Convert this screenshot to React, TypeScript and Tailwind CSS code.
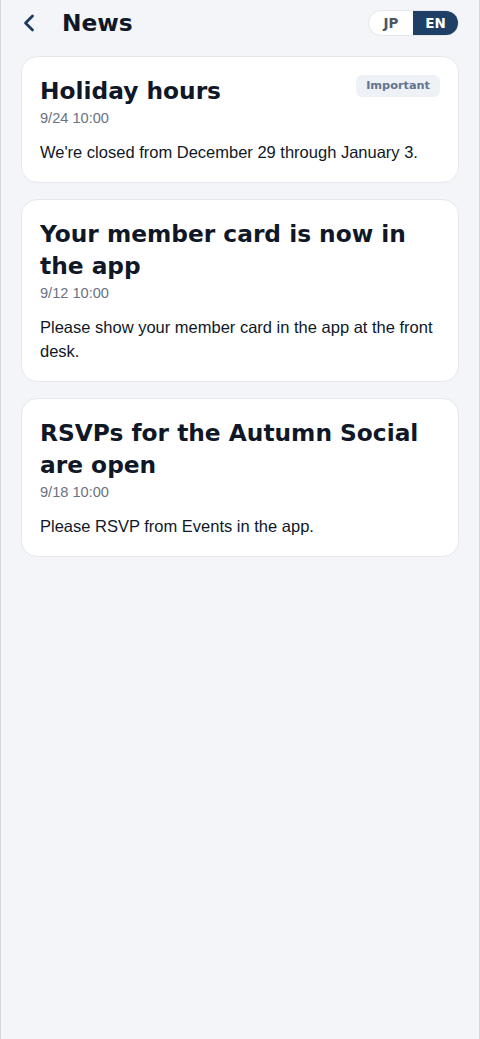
import { ChevronLeft } from "lucide-react";

type NewsItem = {
  title: string;
  date: string;
  body: string;
  important?: boolean;
};

const news: NewsItem[] = [
  {
    title: "Holiday hours",
    date: "9/24 10:00",
    body: "We're closed from December 29 through January 3.",
    important: true,
  },
  {
    title: "Your member card is now in the app",
    date: "9/12 10:00",
    body: "Please show your member card in the app at the front desk.",
  },
  {
    title: "RSVPs for the Autumn Social are open",
    date: "9/18 10:00",
    body: "Please RSVP from Events in the app.",
  },
];

function NewsCard({ item }: { item: NewsItem }) {
  return (
    <div className="rounded-2xl border border-gray-200 bg-white p-[18px]">
      <div className="flex items-start justify-between gap-3">
        <h2 className="font-['DejaVu_Sans',sans-serif] text-[23.3px] font-bold leading-8 text-gray-900">
          {item.title}
        </h2>
        {item.important && (
          <span className="shrink-0 rounded-md bg-[#eef1f5] px-2.5 py-[3px] font-['DejaVu_Sans',sans-serif] text-[11.3px] font-bold leading-4 text-slate-500">
            Important
          </span>
        )}
      </div>
      <div className="mt-[1px] text-[14.6px] leading-5 text-gray-500">
        {item.date}
      </div>
      <p className="mt-3 text-[16.5px] leading-6 text-gray-900">
        {item.body}
      </p>
    </div>
  );
}

export default function App() {
  const lang = "EN";

  return (
    <div className="mx-auto min-h-screen max-w-[480px] border-x border-gray-300 bg-[#f4f5f8] font-['Liberation_Sans',Arial,sans-serif]">
      <header className="flex h-[46px] items-center justify-between pl-[14px] pr-5">
        <div className="flex items-center gap-[19px]">
          <button className="flex h-7 w-7 items-center justify-center text-[#1e3a5f]">
            <ChevronLeft size={28} strokeWidth={2.4} />
          </button>
          <h1 className="font-['DejaVu_Sans',sans-serif] text-[23.3px] font-bold text-gray-900">
            News
          </h1>
        </div>
        <div className="flex h-[26px] overflow-hidden rounded-full border border-gray-200 bg-white font-['DejaVu_Sans',sans-serif] text-[13.5px] font-bold">
          <button
            className={
              lang === "JP"
                ? "w-[44px] bg-[#1e3f66] text-white"
                : "w-[44px] text-gray-600"
            }
          >
            JP
          </button>
          <button
            className={
              lang === "EN"
                ? "w-[45px] bg-[#1e3f66] text-white"
                : "w-[45px] text-gray-600"
            }
          >
            EN
          </button>
        </div>
      </header>

      <div className="flex flex-col gap-4 px-5 pt-[10px]">
        {news.map((item) => (
          <NewsCard key={item.title} item={item} />
        ))}
      </div>
    </div>
  );
}
